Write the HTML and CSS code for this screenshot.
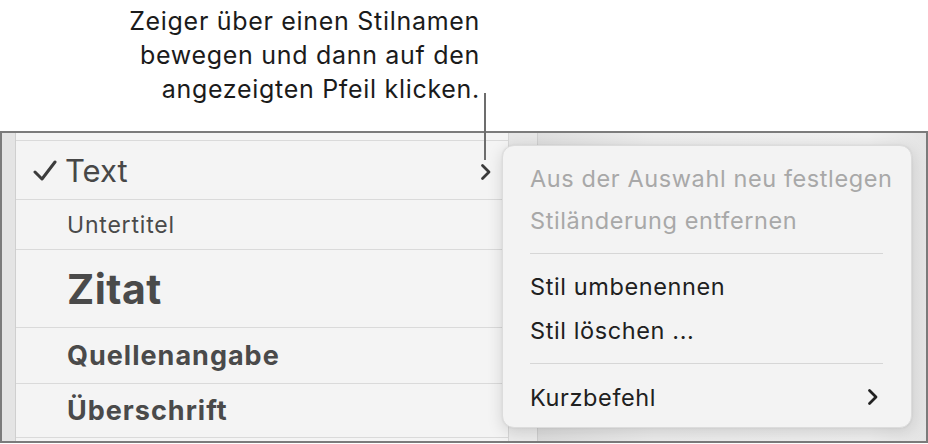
FILE: index.html
```html
<!DOCTYPE html>
<html lang="de">
<head>
<meta charset="utf-8">
<link rel="stylesheet" href="styles.css">
</head>
<body>
<div class="page">
  <div class="caption">
    <p>Zeiger über einen Stilnamen<br>bewegen und dann auf den<br>angezeigten Pfeil klicken.</p>
  </div>
  <div class="frame">
    <div class="gutter"></div>
    <div class="list">
      <div class="row row-text">
        <svg class="check" width="24" height="22" viewBox="0 0 24 22"><polyline points="2,12 9,19 22,2" fill="none" stroke="#3c3c3c" stroke-width="3" stroke-linecap="round" stroke-linejoin="round"/></svg>
        <span class="name">Text</span>
        <svg class="row-chev" width="14" height="18" viewBox="0 0 14 18"><polyline points="3.5,2.5 10,9 3.5,15.5" fill="none" stroke="#3a3a3a" stroke-width="2.8" stroke-linecap="round" stroke-linejoin="round"/></svg>
      </div>
      <div class="row row-sub"><span class="name">Untertitel</span></div>
      <div class="row row-quote"><span class="name">Zitat</span></div>
      <div class="row row-src"><span class="name">Quellenangabe</span></div>
      <div class="row row-head"><span class="name">Überschrift</span></div>
    </div>
    <div class="col"></div>
    <div class="rest"></div>
  </div>
  <div class="leader"></div>
  <div class="menu">
    <div class="item disabled">Aus der Auswahl neu festlegen</div>
    <div class="item disabled">Stiländerung entfernen</div>
    <div class="sep"></div>
    <div class="item tall">Stil umbenennen</div>
    <div class="item tall">Stil löschen ...</div>
    <div class="sep sep2"></div>
    <div class="item item-sub">Kurzbefehl
      <svg class="menu-chev" width="14" height="18" viewBox="0 0 14 18"><polyline points="3.5,2.5 10,9 3.5,15.5" fill="none" stroke="#222" stroke-width="2.8" stroke-linecap="round" stroke-linejoin="round"/></svg>
    </div>
  </div>
</div>
</body>
</html>
```

FILE: styles.css
```css
* { box-sizing: border-box; }
html, body { margin: 0; padding: 0; background: #fff; }
body { font-family: Inter, Roboto, "Liberation Sans", sans-serif; }
.page { position: relative; width: 928px; height: 444px; overflow: hidden; }

.caption { height: 131px; display: flex; justify-content: flex-end; padding-right: 448px; }
.caption p {
  margin: 4px 0 0; text-align: right; font-size: 25px; line-height: 34px; color: #1b1b1b;
  letter-spacing: 0.7px; white-space: nowrap;
}

.frame {
  display: flex; width: 928px; height: 312px;
  border: 2px solid #7b7b7b;
  background: #f4f4f4;
}
.gutter { width: 14px; background: #e4e4e4; border-right: 1px solid #cfcfcf; }
.list { width: 492px; padding-top: 7px; background: #f4f4f4; }
.col { width: 30px; background: linear-gradient(#e6e6e6, #ececec); border-left: 1px solid #d6d6d6; border-right: 1px solid #cfcfcf; }
.rest { flex: 1; background: linear-gradient(90deg, #dedede, #ececec 30%, #efefef 85%, #e4e4e4); }

.row { display: flex; align-items: center; border-top: 1px solid #dadada; padding-left: 51px; color: #4a4a4a; position: relative; }
.row-text { height: 59px; padding-left: 17px; }
.row-text .check { margin-right: 8px; margin-top: 2px; }
.row-text .name { font-size: 31px; color: #474747; }
.row-chev { position: absolute; left: 463px; top: 22px; }
.row-sub { height: 50px; font-size: 23px; letter-spacing: 0.8px; }
.row-quote { height: 78px; font-size: 41px; font-weight: 700; letter-spacing: 0.5px; }
.row-src { height: 56px; font-size: 27px; font-weight: 700; letter-spacing: 1px; }
.row-head { height: 55px; font-size: 27px; font-weight: 700; letter-spacing: 1px; border-bottom: 1px solid #dadada; }

.leader { position: absolute; left: 484px; top: 93px; width: 2px; height: 67px; background: #6d6d6d; }

.menu {
  position: absolute; left: 502px; top: 145px; width: 410px; height: 283px;
  background: #f3f3f3; border-radius: 12px; border: 1px solid #dcdcdc;
  box-shadow: 0 4px 16px rgba(0,0,0,0.14), 0 0 2px rgba(0,0,0,0.08);
  padding: 11px 28px 0 27px;
}
.item { font-size: 23.5px; letter-spacing: 0.6px; color: #202020; height: 42px; display: flex; align-items: center; white-space: nowrap; }
.item.tall { height: 44px; }
.item.disabled { color: #a8a8a8; }
.sep { height: 1px; background: #d6d6d6; margin: 12px 0 10px; }
.sep.sep2 { margin: 11px 0 12px; }
.item-sub { justify-content: space-between; }
.menu-chev { margin-right: 3px; }
```
